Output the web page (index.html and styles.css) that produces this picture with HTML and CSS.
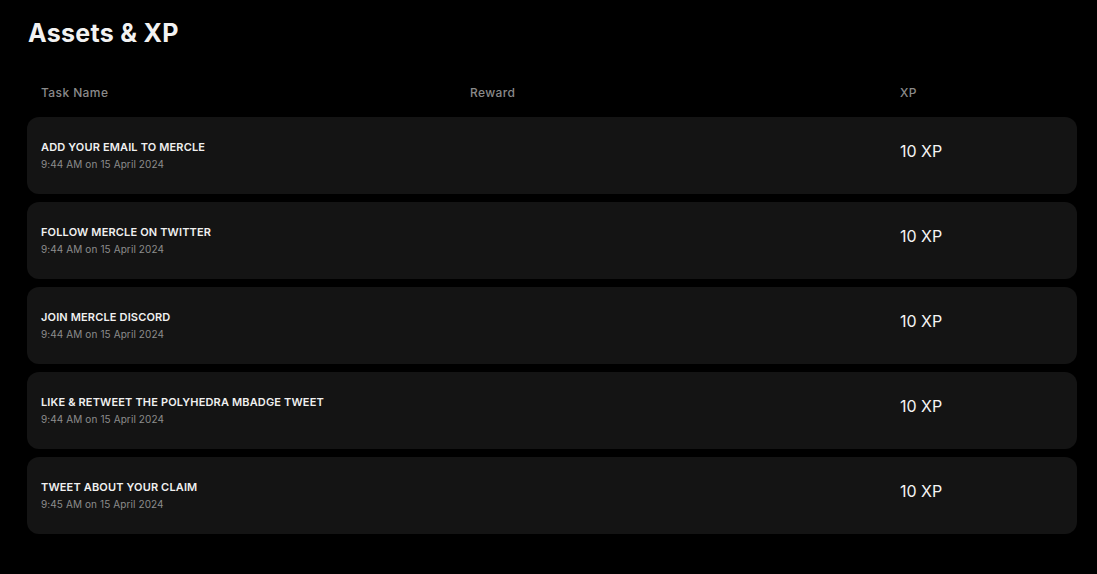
FILE: index.html
```html
<!DOCTYPE html>
<html>
<head>
<meta charset="utf-8">
<link rel="stylesheet" href="styles.css">
</head>
<body>
<main class="page">
  <h1 class="title">Assets &amp; XP</h1>
  <div class="table">
    <div class="head row-grid">
      <div>Task Name</div>
      <div>Reward</div>
      <div>XP</div>
    </div>
    <div class="row row-grid">
      <div class="task"><div class="name">ADD YOUR EMAIL TO MERCLE</div><div class="date">9:44 AM on 15 April 2024</div></div>
      <div class="reward"></div>
      <div class="xp">10 XP</div>
    </div>
    <div class="row row-grid">
      <div class="task"><div class="name">FOLLOW MERCLE ON TWITTER</div><div class="date">9:44 AM on 15 April 2024</div></div>
      <div class="reward"></div>
      <div class="xp">10 XP</div>
    </div>
    <div class="row row-grid">
      <div class="task"><div class="name">JOIN MERCLE DISCORD</div><div class="date">9:44 AM on 15 April 2024</div></div>
      <div class="reward"></div>
      <div class="xp">10 XP</div>
    </div>
    <div class="row row-grid">
      <div class="task"><div class="name">LIKE &amp; RETWEET THE POLYHEDRA MBADGE TWEET</div><div class="date">9:44 AM on 15 April 2024</div></div>
      <div class="reward"></div>
      <div class="xp">10 XP</div>
    </div>
    <div class="row row-grid">
      <div class="task"><div class="name">TWEET ABOUT YOUR CLAIM</div><div class="date">9:45 AM on 15 April 2024</div></div>
      <div class="reward"></div>
      <div class="xp">10 XP</div>
    </div>
  </div>
</main>
</body>
</html>
```
FILE: styles.css
```css
* { box-sizing: border-box; }
html, body { margin: 0; padding: 0; background: #000; }
body { font-family: Inter, "Noto Sans", sans-serif; color: #fff; }
.page { padding: 18px 20px 0 27px; }
.title {
  margin: 0 0 0 1px;
  font-size: 25px;
  font-weight: 700;
  line-height: 30px;
  color: #f2f2f2;
  letter-spacing: 0.3px;
}
.table { margin-top: 37px; display: flex; flex-direction: column; gap: 8px; }
.row-grid {
  display: grid;
  grid-template-columns: 429px 430px 1fr;
  padding: 0 14px;
}
.head {
  font-size: 12px;
  font-weight: 500;
  color: #8a8a8a;
  line-height: 16px;
  height: 30px;
  align-items: start;
  letter-spacing: 0.4px;
  margin-bottom: -6px;
}
.row {
  background: #141414;
  border-radius: 12px;
  height: 77px;
  align-items: start;
  padding-top: 23px;
}
.name {
  font-size: 11px;
  font-weight: 600;
  letter-spacing: 0.15px;
  color: #f0f0f0;
  line-height: 14px;
}
.date {
  font-size: 10px;
  color: #8c8c8c;
  line-height: 14px;
  margin-top: 3px;
  letter-spacing: 0.1px;
}
.xp {
  font-size: 16px;
  color: #f4f4f4;
  line-height: 20px;
  padding-top: 1px;
}
```
